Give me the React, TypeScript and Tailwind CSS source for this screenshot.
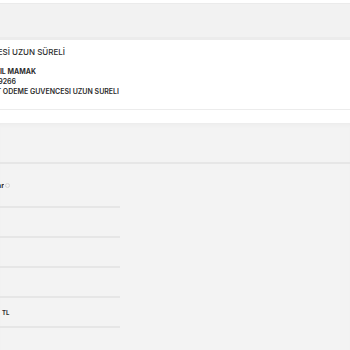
import React from "react";

function Clip({ w, children, className = "" }: { w: number; children: React.ReactNode; className?: string }) {
  return (
    <div className={"overflow-hidden whitespace-nowrap shrink-0 " + className} style={{ width: w }}>
      <span className="float-right">{children}</span>
    </div>
  );
}

export default function App() {
  return (
    <div className="w-[350px] h-[350px] overflow-hidden bg-white text-[#2d2d2d]" style={{ fontFamily: "Inter, 'Noto Sans', sans-serif" }}>
      <div className="h-[3px] bg-white" />
      <div className="h-[37px] bg-[#f2f2f2] border-t border-[#ebebeb] border-b-[3px] border-b-[#ececec]" />
      <div className="bg-white pt-[7px] h-[83px] flex flex-col items-start">
        <Clip w={65} className="text-[8px] font-medium leading-[10px] h-[10px]">
          TAKSİT ÖDEME GÜVENCESİ UZUN SÜRELİ
        </Clip>
        <div className="h-[10px]" />
        <Clip w={36} className="text-[7px] font-bold leading-[10px] h-[10px]">
          İSTANBUL YENİMAHALLE ANKARA İL MAMAK
        </Clip>
        <Clip w={16} className="text-[7px] font-semibold leading-[10px] h-[10px]">
          5321239266
        </Clip>
        <Clip w={119} className="text-[7px] font-semibold leading-[10px] h-[10px]">
          KREDİ TAKSİT ÖDEME GÜVENCESİ UZUN SÜRELİ
        </Clip>
        <div className="mt-[12px] w-full border-b border-[#ececec]" />
      </div>
      <div className="bg-[#f3f3f3] h-[227px] shadow-[inset_0_4px_4px_-2px_rgba(0,0,0,0.03)]">
        <div className="h-[39px]" />
        <div className="border-b-2 border-[#e6e6e6]" />
        <div className="w-[120px]">
          <div className="h-[42px] flex items-center gap-[1px] pt-[1px]">
            <Clip w={4} className="text-[7px] font-bold leading-[10px]">Tutar</Clip>
            <span className="w-[5px] h-[5px] rounded-full border border-[#d5d5d5]" />
          </div>
          <div className="border-b-2 border-[#e6e6e6]" />
          <div className="h-[28px]" />
          <div className="border-b-2 border-[#e6e6e6]" />
          <div className="h-[28px]" />
          <div className="border-b-2 border-[#e6e6e6]" />
          <div className="h-[28px]" />
          <div className="border-b-2 border-[#e6e6e6]" />
          <div className="h-[28px] flex items-center pt-[1px]">
            <span className="text-[6px] font-bold ml-[2px] leading-none">TL</span>
          </div>
          <div className="border-b-2 border-[#e6e6e6]" />
        </div>
      </div>
    </div>
  );
}
